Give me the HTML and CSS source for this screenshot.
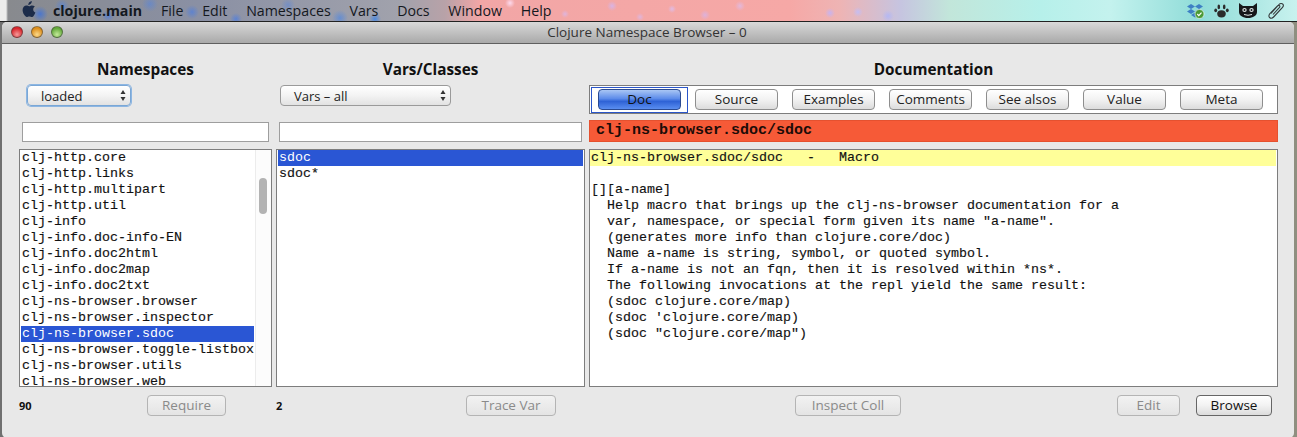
FILE: index.html
```html
<!DOCTYPE html>
<html lang="en">
<head>
<meta charset="utf-8">
<title>Clojure Namespace Browser</title>
<link rel="stylesheet" href="styles.css">
</head>
<body>
<header class="menubar">
  <svg class="apple" viewBox="0 0 14 17" width="14" height="16"><path d="M10 0c.1 1.200-.3 2.200-1 3-.7.8-1.700 1.300-2.700 1.200C6.200 3.100 6.700 2 7.300 1.300 8 .6 9.100.1 10 0zM13.300 5.800c-1.200.8-1.800 1.800-1.800 3.100 0 1.500.8 2.700 2.300 3.300-.4 1.200-.9 2.200-1.600 3.100-.7 1-1.400 1.700-2.300 1.700-.9 0-1.400-.6-2.600-.6-1.200 0-1.800.6-2.700.6-1 0-1.700-.8-2.500-2C.9 13.500.2 11.300.2 9.600c0-2.800 1.800-4.800 4.200-4.800 1.100 0 2 .7 2.700.7.700 0 1.700-.8 3-.8 1.300 0 2.400.4 3.200 1.100z" fill="#1c2c4a"/></svg>
  <nav class="menus">
    <span class="app-name">clojure.main</span>
    <span>File</span><span>Edit</span><span>Namespaces</span><span>Vars</span><span>Docs</span><span>Window</span><span>Help</span>
  </nav>
  <div class="tray">
    <svg class="tray-dropbox" viewBox="0 0 19 16" width="19" height="16"><path d="M5 1 9 3.500 5 6 1 3.500zM13 1l4 2.500L13 6 9 3.500zM5 6l4 2.500L5 11 1 8.500zM13 6l4 2.500L13 11 9 8.500zM5 12l4-2.500 4 2.500-4 2.500z" fill="#3d7fc4"/><circle cx="13.500" cy="11" r="4.500" fill="#4a9a35" stroke="#fff" stroke-width=".6"/><path d="M11.300 11l1.500 1.600 2.700-3" fill="none" stroke="#fff" stroke-width="1.200"/></svg>
    <svg class="tray-paw" viewBox="0 0 15 14" width="15" height="14"><g fill="#2b2b2b"><ellipse cx="7.500" cy="9.800" rx="4.300" ry="3.600"/><ellipse cx="1.700" cy="6.300" rx="1.400" ry="1.900"/><ellipse cx="4.800" cy="2.900" rx="1.300" ry="2.300"/><ellipse cx="10.200" cy="2.900" rx="1.300" ry="2.300"/><ellipse cx="13.300" cy="6.300" rx="1.400" ry="1.900"/></g></svg>
    <svg class="tray-cat" viewBox="0 0 20 15" width="20" height="15"><path d="M1 0l4 3h10l4-3v9c0 3.500-4 6-9 6s-9-2.500-9-6z" fill="#16181a"/><ellipse cx="6.500" cy="7" rx="2.200" ry="2" fill="#dfe6e6"/><ellipse cx="13.500" cy="7" rx="2.200" ry="2" fill="#dfe6e6"/><circle cx="6.500" cy="7" r="1" fill="#16181a"/><circle cx="13.500" cy="7" r="1" fill="#16181a"/><path d="M6 11.500q4 1.500 8 0" fill="none" stroke="#dfe6e6"/></svg>
    <svg class="tray-clip" viewBox="0 0 18 17" width="18" height="17"><path d="M4 11.500 12 2.500c1.200-1.300 3-1.300 3.800-.4.800.9.600 2.400-.5 3.600L6.600 15c-1.200 1.300-3 1.400-4 .5s-.9-2.500.3-3.800L10.500 4c.6-.7 1.500-.8 2-.3.500.5.400 1.300-.2 2L6 12.500" fill="none" stroke="#33393a" stroke-width="1.100"/></svg>
  </div>
</header>
<div class="desktop">
<main class="window">
  <div class="titlebar">
    <div class="lights"><i class="light red"></i><i class="light amber"></i><i class="light green"></i></div>
    <div class="title">Clojure Namespace Browser – 0</div>
  </div>
  <div class="content">
    <h2>Namespaces</h2>
    <h2>Vars/Classes</h2>
    <h2>Documentation</h2>

    <div class="ctl ctl-ns"><div class="select select-focus select-ns"><span>loaded</span><svg viewBox="0 0 6 11" width="6" height="11"><path d="M3 0l2.500 4h-5zM3 11 .5 7h5z" fill="#333"/></svg></div></div>
    <div class="ctl ctl-vars"><div class="select select-vars"><span>Vars – all</span><svg viewBox="0 0 6 11" width="6" height="11"><path d="M3 0l2.500 4h-5zM3 11 .5 7h5z" fill="#333"/></svg></div></div>
    <div class="tabs">
      <div class="doc-focus"><button class="btn btn-primary">Doc</button></div>
      <button class="btn tab-btn">Source</button>
      <button class="btn tab-btn">Examples</button>
      <button class="btn tab-btn">Comments</button>
      <button class="btn tab-btn">See alsos</button>
      <button class="btn tab-btn">Value</button>
      <button class="btn tab-btn">Meta</button>
    </div>

    <div class="field-wrap"><div class="field"></div></div>
    <div class="field-wrap"><div class="field"></div></div>
    <div class="doc-name">clj-ns-browser.sdoc/sdoc</div>

    <div class="list list-ns">
      <ul class="rows">
        <li>clj-http.core</li><li>clj-http.links</li><li>clj-http.multipart</li><li>clj-http.util</li><li>clj-info</li><li>clj-info.doc-info-EN</li><li>clj-info.doc2html</li><li>clj-info.doc2map</li><li>clj-info.doc2txt</li><li>clj-ns-browser.browser</li><li>clj-ns-browser.inspector</li><li class="sel">clj-ns-browser.sdoc</li><li>clj-ns-browser.toggle-listbox</li><li>clj-ns-browser.utils</li><li>clj-ns-browser.web</li>
      </ul>
      <div class="scroll"><div class="thumb"></div></div>
    </div>
    <div class="list list-vars">
      <ul class="rows"><li class="sel">sdoc</li><li>sdoc*</li></ul>
    </div>
    <div class="list doc">
      <div class="doc-head">clj-ns-browser.sdoc/sdoc   -   Macro</div>
<pre class="doc-body">

[][a-name]
  Help macro that brings up the clj-ns-browser documentation for a
  var, namespace, or special form given its name "a-name".
  (generates more info than clojure.core/doc)
  Name a-name is string, symbol, or quoted symbol.
  If a-name is not an fqn, then it is resolved within *ns*.
  The following invocations at the repl yield the same result:
  (sdoc clojure.core/map)
  (sdoc 'clojure.core/map)
  (sdoc "clojure.core/map")</pre>
    </div>

    <div class="foot foot-ns"><span class="count">90</span><button class="btn off btn-require">Require</button></div>
    <div class="foot foot-vars"><span class="count">2</span><button class="btn off btn-trace">Trace Var</button></div>
    <div class="foot foot-doc"><button class="btn off btn-inspect">Inspect Coll</button><button class="btn off btn-edit">Edit</button><button class="btn btn-browse">Browse</button></div>
  </div>
</main>
</div>
</body>
</html>
```
FILE: styles.css
```css
* { box-sizing: border-box; }
html, body { margin: 0; padding: 0; }
body {
  width: 1297px; height: 437px; overflow: hidden;
  background: linear-gradient(90deg, #707070 0, #707070 10px, #8f8f80 1290px);
  font-family: "Open Sans", "Liberation Sans", sans-serif;
  color: #111;
}
.menubar {
  height: 22px;
  display: flex; align-items: center;
  border-bottom: 1px solid #222;
  font-size: 14.200px;
  color: #14181e;
  background:
    radial-gradient(circle 8px at 40px 14px, rgba(50,110,230,.7), transparent),
    radial-gradient(circle 7px at 62px 6px, rgba(70,130,240,.55), transparent),
    radial-gradient(circle 6px at 108px 16px, rgba(60,120,240,.6), transparent),
    radial-gradient(circle 8px at 150px 4px, rgba(70,130,240,.45), transparent),
    radial-gradient(circle 7px at 192px 12px, rgba(60,120,240,.55), transparent),
    radial-gradient(circle 6px at 236px 19px, rgba(60,120,240,.6), transparent),
    radial-gradient(circle 7px at 288px 5px, rgba(70,130,240,.4), transparent),
    radial-gradient(circle 8px at 340px 18px, rgba(60,130,240,.55), transparent),
    radial-gradient(circle 6px at 375px 19px, rgba(50,130,240,.75), transparent),
    radial-gradient(circle 5px at 510px 3px, rgba(255,230,255,.8), transparent),
    radial-gradient(circle 4px at 565px 14px, rgba(210,190,255,.6), transparent),
    radial-gradient(circle 5px at 612px 6px, rgba(205,185,255,.7), transparent),
    radial-gradient(circle 4px at 640px 17px, rgba(210,190,255,.6), transparent),
    radial-gradient(circle 4px at 672px 9px, rgba(215,195,255,.7), transparent),
    radial-gradient(circle 5px at 705px 15px, rgba(205,185,255,.6), transparent),
    radial-gradient(circle 5px at 740px 6px, rgba(215,195,255,.6), transparent),
    radial-gradient(circle 5px at 830px 13px, rgba(190,180,255,.8), transparent),
    radial-gradient(circle 5px at 858px 12px, rgba(190,190,255,.8), transparent),
    radial-gradient(circle 6px at 888px 16px, rgba(170,180,255,.7), transparent),
    linear-gradient(90deg, #ececec 0, #ececec 6px, #888a8e 8px, #8a90a4 200px, #a1a2ac 400px, #b8a2a8 445px, #f2a6a6 480px, #f6a8a6 790px, #eeb4b4 840px, #c6c4e0 900px, #c2e6da 950px, #b6f0ea 1040px, #c4f2ee 1110px, #8fdcd8 1200px, #c8f2ee 1297px);
}
.apple { margin-left: 22px; margin-top: -3px; flex: none; }
.menus { display: flex; gap: 18.800px; margin-left: 17px; white-space: nowrap; }
.app-name { font-weight: 700; }
.tray { display: flex; align-items: center; margin-left: auto; margin-right: 12px; gap: 9px; }
.tray svg { display: block; }

.desktop { height: 415px; padding: 0 3px 0 2px; }
.window {
  height: 416px;
  background: #e8e8e8;
  border-radius: 5px;
  overflow: hidden;
}
.titlebar {
  height: 22px;
  position: relative;
  display: flex; align-items: center; justify-content: center;
  background: linear-gradient(#d9d9d9, #a9a9a9);
  border-bottom: 1px solid #5f5f5f;
}
.title { font-size: 13.500px; color: #333; margin-top: -1px; margin-left: -2px; }
.lights { position: absolute; left: 9px; top: 4px; display: flex; gap: 8px; }
.light { width: 12px; height: 12px; border-radius: 50%; border: 1px solid rgba(60,60,60,.55); display: block; }
.red { background: radial-gradient(circle at 50% 75%, #f59a9a, #d8242a 70%); }
.amber { background: radial-gradient(circle at 50% 75%, #fbd98a, #dc8d1a 70%); }
.green { background: radial-gradient(circle at 50% 75%, #c4ea9a, #62a83a 70%); }

.content {
  display: grid;
  grid-template-columns: 253px 309px 689px;
  grid-template-rows: 18px 36px 28px 245px auto;
  column-gap: 4px;
  padding: 16px 0 0 17px;
}
h2 {
  margin: 0;
  font-size: 15.300px; line-height: 18px; font-weight: 700;
  text-align: center; color: #111;
}
.ctl { padding-top: 7px; }
.ctl-ns { padding-left: 8px; }
.ctl-vars { padding-left: 4px; }
.select {
  height: 21px;
  display: flex; align-items: center; justify-content: space-between;
  padding: 0 4px 0 13px;
  background: linear-gradient(#fff, #f3f3f3 50%, #e2e2e2);
  border: 1px solid #9a9a9a; border-radius: 4px;
  font-size: 13px;
  color: #222;
}
.select-ns { width: 104px; }
.select-vars { width: 171px; }
.select-focus { border-color: #7aa7d6; box-shadow: 0 0 0 1px #8db6e2; }

.tabs {
  margin-top: 7px;
  height: 29px;
  display: flex; align-items: center;
  background: #fff;
  border: 1px solid #7d7d7d;
}
.doc-focus {
  height: 26px; width: 97px; flex: none;
  margin: 0 7px 0 1px;
  display: flex; align-items: center; padding-left: 6px;
  border: 1px solid #2a55c8;
}
.btn {
  height: 21px; padding: 0;
  font: inherit; font-size: 13.500px; line-height: 19px; color: #222;
  background: linear-gradient(#fff, #f2f2f2 50%, #dcdcdc);
  border: 1px solid #8e8e8e; border-radius: 4px;
}
.tab-btn { width: 83px; margin-left: 14px; flex: none; }
.doc-focus + .tab-btn { margin-left: 0; }
.btn-primary {
  width: 83px;
  background: linear-gradient(#a9c6f4, #5d8cea 45%, #2e62d6 60%, #5a8ef0);
  border-color: #2a4a92;
  color: #111;
}

.field-wrap { padding: 8px 3px 0; }
.field { height: 20px; background: #fff; border: 1px solid #9e9e9e; }
.doc-name {
  margin-top: 6px; height: 22px;
  background: #f65a37;
  border: 1px solid #e5512f;
  padding-left: 6px;
  font: 700 15px/20px "Liberation Mono", monospace;
  color: #1c0c08;
}

.list {
  margin-top: 7px;
  height: 238px;
  background: #fff;
  border: 1px solid #7d7d7d;
  overflow: hidden;
  position: relative;
  font: 13.330px/16px "Liberation Mono", monospace;
  color: #111;
  -webkit-text-stroke: .15px #111;
}
.rows { list-style: none; margin: 0; padding: 0 1px; }
.rows li { height: 16px; padding-left: 1px; white-space: nowrap; }
.rows li.sel { background: #2a56d4; color: #fff; -webkit-text-stroke: 0; }
.list-ns .rows { margin-right: 16px; }
.scroll {
  position: absolute; right: 0; top: 0; bottom: 0; width: 16px;
  background: #fcfcfc; border-left: 1px solid #ececec;
}
.thumb {
  width: 8px; height: 36px; margin: 28px 0 0 3px;
  background: #b3b3b3; border-radius: 4px;
}
.doc-head { height: 16px; margin-right: 1px; background: #ffff99; padding-left: 1px; white-space: pre; }
.doc-body { margin: 0; padding-left: 1px; font: inherit; white-space: pre; }

.foot { display: flex; align-items: center; height: 21px; margin-top: 8px; }
.count { font-size: 11px; font-weight: 700; width: 20px; flex: none; }
.btn.off { color: #8a8a8a; background: linear-gradient(#f2f2f2, #e4e4e4); border-color: #b4b4b4; }
.btn-require { width: 79px; margin-left: 108px; }
.btn-trace { width: 90px; margin-left: 170px; }
.btn-inspect { width: 106px; margin-left: 206px; }
.btn-edit { width: 63px; margin-left: 216px; }
.btn-browse { width: 76px; margin-left: 16px; color: #111; border-color: #666; }
```
